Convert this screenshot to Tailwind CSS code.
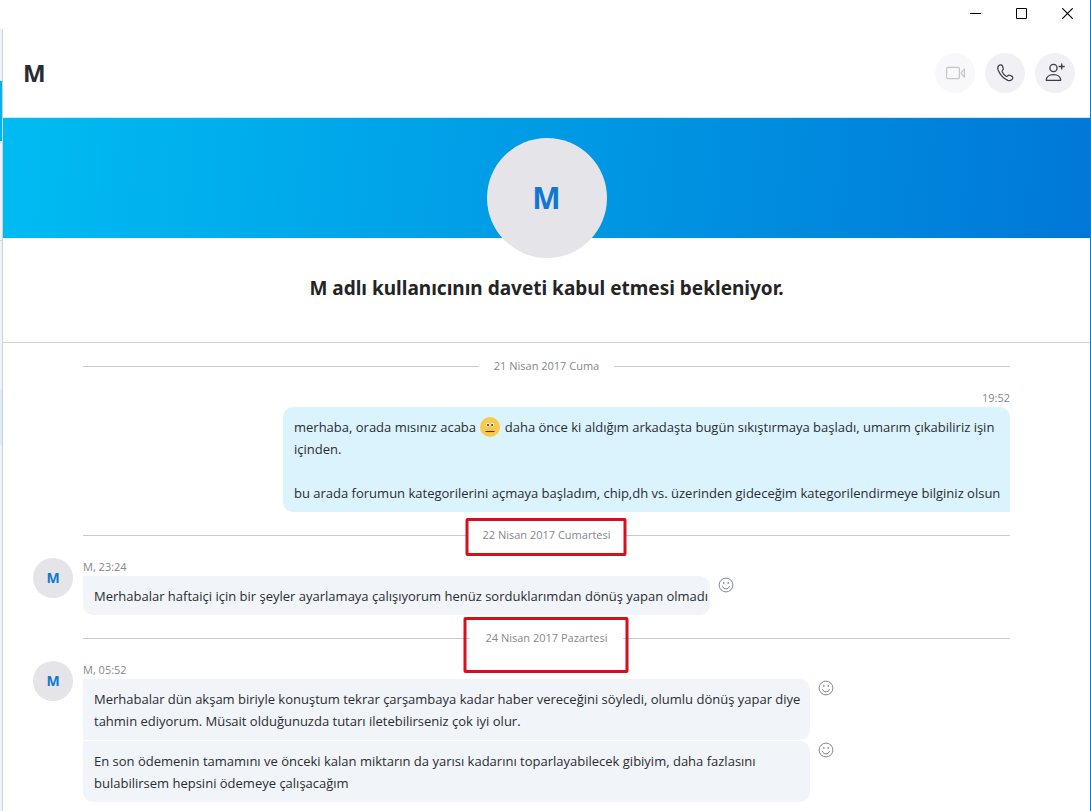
<!DOCTYPE html>
<html lang="tr">
<head>
  <meta charset="UTF-8">
  <meta name="viewport" content="width=device-width, initial-scale=1.0" />
  <title>M</title>
  <script src="https://cdn.jsdelivr.net/npm/@tailwindcss/browser@4"></script>
</head>
<body class="bg-white font-['Open_Sans',sans-serif] text-[#2b2c33]">
  <div class="min-h-screen flex flex-col border-r border-[#0f7cd6]">

    <!-- Window controls -->
    <div class="h-[29px] flex justify-end text-black">
      <button type="button" aria-label="Simge durumuna küçült" class="w-[46px] flex items-center justify-center pb-[3px]">
        <svg class="size-[11px]" viewBox="0 0 11 11" fill="none" stroke="currentColor"><path d="M0 5.5h11"/></svg>
      </button>
      <button type="button" aria-label="Ekranı kapla" class="w-[46px] flex items-center justify-center pb-[3px]">
        <svg class="size-[11px]" viewBox="0 0 11 11" fill="none" stroke="currentColor"><path d="M.5.5h10v10H.5z"/></svg>
      </button>
      <button type="button" aria-label="Kapat" class="w-[46px] flex items-center justify-center pb-[3px]">
        <svg class="size-[11px]" viewBox="0 0 11 11" fill="none" stroke="currentColor" stroke-width="1.2"><path d="M.3.3l10.4 10.4M10.7.3L.3 10.7"/></svg>
      </button>
    </div>

    <div class="flex-1 flex">
      <!-- Edge of the conversation list -->
      <aside class="w-[3px] shrink-0 border-r border-[#cfd3d8] bg-[#f0f4f8]">
        <div class="h-[52px]"></div>
        <div class="h-[60px] bg-[#00b2ee]"></div>
        <div class="h-[100px] border-b border-[#d3d6da]"></div>
        <div class="h-[148px]"></div>
        <div class="h-[56px] bg-[#dcecf8]"></div>
      </aside>

      <main class="flex-1 min-w-0">
        <header class="h-[88px] flex items-center justify-between pl-5 pr-[15px]">
          <h1 class="text-2xl font-bold">M</h1>
          <div class="flex gap-[10px]">
            <button type="button" disabled aria-label="Görüntülü arama" class="size-10 rounded-full bg-[#f8f8fa] text-[#c6c6ca] flex items-center justify-center">
              <svg class="size-6" viewBox="0 0 24 24" fill="none" stroke="currentColor" stroke-width="1.2" stroke-linejoin="round">
                <rect x="3.6" y="6.4" width="12.8" height="11.2" rx="1"/>
                <path d="M21.4 8v8.2l-3.4-4.1z"/>
              </svg>
            </button>
            <button type="button" aria-label="Ara" class="size-10 rounded-full bg-[#f0f0f5] text-[#3b3c44] flex items-center justify-center">
              <svg class="size-6" viewBox="0 0 24 24" fill="none" stroke="currentColor" stroke-width="1.2" stroke-linejoin="round" stroke-linecap="round">
                <path d="M6.2 4.3c1.3-1 3-.4 3.5 1.2l.5 1.9c.2.8-.1 1.5-.7 2-.6.5-.6 1-.3 1.6.9 1.8 2.1 3.2 3.9 4.2.6.3 1.1.2 1.5-.3.6-.7 1.3-.9 2.1-.6l1.6.6c1.5.6 1.9 2.3.8 3.5-1.1 1.2-2.7 1.6-4.3 1C10.5 17.5 6.9 13.3 5.1 9c-.6-1.6-.4-3.5 1.1-4.7z"/>
              </svg>
            </button>
            <button type="button" aria-label="Kişi ekle" class="size-10 rounded-full bg-[#f0f0f5] text-[#3b3c44] flex items-center justify-center">
              <svg class="size-6" viewBox="0 0 24 24" fill="none" stroke="currentColor" stroke-width="1.3" stroke-linejoin="round">
                <circle cx="10.5" cy="7" r="3.6"/>
                <path d="M3.3 19.3c0-3.4 2.9-5.6 7.2-5.6s7.2 2.2 7.2 5.6z"/>
                <path d="M18.7 2.5v6M15.7 5.5h6"/>
              </svg>
            </button>
          </div>
        </header>

        <!-- Profile banner -->
        <section class="border-y border-t-[#c9ecfb] border-b-[#d2d2d6]">
          <div class="h-[120px] pt-5 flex justify-center bg-linear-95 from-[#00bcf2] to-[#0078d7]">
            <div class="size-[120px] rounded-full bg-[#e4e4e9] flex items-center justify-center text-3xl font-bold text-[#0f78d0]">M</div>
          </div>
          <h2 class="mt-9 mb-10 text-center font-['Noto_Sans',sans-serif] text-[19px] leading-7 font-bold text-[#242424]">M adlı kullanıcının daveti kabul etmesi bekleniyor.</h2>
        </section>

        <section class="px-20 pt-[15px] pb-[9px] flex flex-col gap-[15px] text-[13px] leading-[22px]">
          <div class="flex items-center gap-[15px] text-[11px] leading-4 text-[#85888c]">
            <span class="flex-1 h-px bg-[#cacaca]"></span>
            <time datetime="2017-04-21">21 Nisan 2017 Cuma</time>
            <span class="flex-1 h-px bg-[#cacaca]"></span>
          </div>

          <div class="flex flex-col items-end">
            <p class="text-[11px] leading-[18px] text-[#85888c]">19:52</p>
            <div class="max-w-[727px] pl-[11px] pr-0.5 pt-[9px] pb-2 rounded-[10px] rounded-br-none bg-[#dbf3fd]">
              <p>merhaba, orada mısınız acaba
                <svg class="inline-block size-5 mx-px align-middle -mt-1" viewBox="0 0 20 20" role="img" aria-label="nötr yüz">
                  <circle cx="10" cy="10" r="10" fill="#fac84b"/>
                  <circle cx="7.8" cy="7.8" r="1.8" fill="#fff"/>
                  <circle cx="12.3" cy="7.8" r="1.8" fill="#fff"/>
                  <circle cx="8" cy="8" r="1" fill="#3a2a1a"/>
                  <circle cx="12.1" cy="8" r="1" fill="#3a2a1a"/>
                  <path d="M5.5 14.5h9" stroke="#5a3a1a" stroke-width="1.1"/>
                </svg>
                daha önce ki aldığım arkadaşta bugün sıkıştırmaya başladı, umarım çıkabiliriz işin içinden.</p>
              <p class="mt-[22px]">bu arada forumun kategorilerini açmaya başladım, chip,dh vs. üzerinden gideceğim kategorilendirmeye bilginiz olsun</p>
            </div>
          </div>

          <div class="relative flex items-center gap-[15px] text-[11px] leading-4 text-[#85888c]">
            <span class="flex-1 h-px bg-[#cacaca]"></span>
            <time datetime="2017-04-22">22 Nisan 2017 Cumartesi</time>
            <span class="flex-1 h-px bg-[#cacaca]"></span>
            <div class="absolute -top-[9px] left-1/2 -ml-px -translate-x-1/2 w-[161px] h-[38px] rounded-xs border-3 border-[#d4101c]"></div>
          </div>

          <div class="flex gap-[10px] -ml-[50px]">
            <div class="size-10 shrink-0 rounded-full bg-[#e4e4e9] flex items-center justify-center text-sm font-bold text-[#0f78d0]">M</div>
            <div class="flex-1 min-w-0">
              <p class="text-[11px] leading-[18px] text-[#85888c]">M, 23:24</p>
              <div class="flex items-start gap-2">
                <p class="max-w-[727px] pl-[11px] pr-0.5 pt-[9px] pb-2 rounded-[10px] rounded-tl-none bg-[#f1f4f8]">Merhabalar haftaiçi için bir şeyler ayarlamaya çalışıyorum henüz sorduklarımdan dönüş yapan olmadı</p>
                <button type="button" aria-label="Tepki ver" class="mt-px text-[#85888c]">
                  <svg class="size-4" viewBox="0 0 16 16" fill="none" stroke="currentColor">
                    <circle cx="8" cy="8" r="6.9"/>
                    <path d="M4.5 9.5a3.7 3.7 0 0 0 7 0" stroke-linecap="round"/>
                    <path d="M5 6h1.5M9.5 6H11" stroke-width="1.3"/>
                  </svg>
                </button>
              </div>
            </div>
          </div>

          <div class="relative flex items-center gap-[15px] text-[11px] leading-4 text-[#85888c]">
            <span class="flex-1 h-px bg-[#cacaca]"></span>
            <time datetime="2017-04-24">24 Nisan 2017 Pazartesi</time>
            <span class="flex-1 h-px bg-[#cacaca]"></span>
            <div class="absolute -top-[13px] left-1/2 -ml-px -translate-x-1/2 w-[165px] h-[56px] rounded-xs border-3 border-[#d4101c]"></div>
          </div>

          <div class="flex gap-[10px] -ml-[50px]">
            <div class="size-10 shrink-0 rounded-full bg-[#e4e4e9] flex items-center justify-center text-sm font-bold text-[#0f78d0]">M</div>
            <div class="flex-1 min-w-0">
              <p class="text-[11px] leading-[18px] text-[#85888c]">M, 05:52</p>
              <div class="flex items-start gap-2">
                <p class="max-w-[727px] pl-[11px] pr-0.5 pt-[9px] pb-2 rounded-[10px] rounded-l-none bg-[#f1f4f8]">Merhabalar dün akşam biriyle konuştum tekrar çarşambaya kadar haber vereceğini söyledi, olumlu dönüş yapar diye tahmin ediyorum. Müsait olduğunuzda tutarı iletebilirseniz çok iyi olur.</p>
                <button type="button" aria-label="Tepki ver" class="mt-px text-[#85888c]">
                  <svg class="size-4" viewBox="0 0 16 16" fill="none" stroke="currentColor">
                    <circle cx="8" cy="8" r="6.9"/>
                    <path d="M4.5 9.5a3.7 3.7 0 0 0 7 0" stroke-linecap="round"/>
                    <path d="M5 6h1.5M9.5 6H11" stroke-width="1.3"/>
                  </svg>
                </button>
              </div>
              <div class="mt-px flex items-start gap-2">
                <p class="max-w-[727px] pl-[11px] pr-0.5 pt-[9px] pb-2 rounded-[10px] rounded-tl-none bg-[#f1f4f8]">En son ödemenin tamamını ve önceki kalan miktarın da yarısı kadarını toparlayabilecek gibiyim, daha fazlasını bulabilirsem hepsini ödemeye çalışacağım</p>
                <button type="button" aria-label="Tepki ver" class="mt-px text-[#85888c]">
                  <svg class="size-4" viewBox="0 0 16 16" fill="none" stroke="currentColor">
                    <circle cx="8" cy="8" r="6.9"/>
                    <path d="M4.5 9.5a3.7 3.7 0 0 0 7 0" stroke-linecap="round"/>
                    <path d="M5 6h1.5M9.5 6H11" stroke-width="1.3"/>
                  </svg>
                </button>
              </div>
            </div>
          </div>
        </section>
      </main>
    </div>
  </div>
</body>
</html>
